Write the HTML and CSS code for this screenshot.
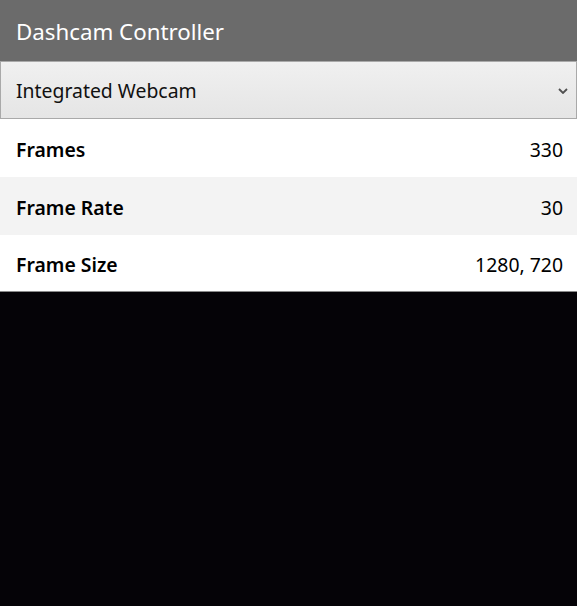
FILE: index.html
```html
<!DOCTYPE html>
<html lang="en">
<head>
<meta charset="utf-8">
<title>Dashcam Controller</title>
<link rel="stylesheet" href="styles.css">
</head>
<body>
<div class="app">
  <header class="topbar">Dashcam Controller</header>
  <div class="picker">
    <span class="picker-label">Integrated Webcam</span>
    <svg class="chevron" width="10" height="6" viewBox="0 0 10 6"><path d="M1 1 L5 5 L9 1" fill="none" stroke="#505050" stroke-width="1.8"/></svg>
  </div>
  <div class="stats">
    <div class="row"><span class="key">Frames</span><span class="val">330</span></div>
    <div class="row alt"><span class="key">Frame Rate</span><span class="val">30</span></div>
    <div class="row"><span class="key">Frame Size</span><span class="val">1280, 720</span></div>
  </div>
  <div class="video"></div>
</div>
</body>
</html>
```
FILE: styles.css
```css
html, body {
  margin: 0;
  padding: 0;
  height: 100%;
}
body {
  font-family: "Noto Sans", "Open Sans", sans-serif;
  background: #050307;
}
.app {
  display: flex;
  flex-direction: column;
  height: 100%;
}
.topbar {
  height: 61px;
  box-sizing: border-box;
  background: #6b6b6b;
  color: #fff;
  font-size: 22.3px;
  display: flex;
  align-items: center;
  padding: 1px 16px 0;
}
.picker {
  height: 58px;
  box-sizing: border-box;
  border: 1px solid #a9a9a9;
  background: linear-gradient(#f0f0f0, #e5e5e5);
  display: flex;
  align-items: center;
  justify-content: space-between;
  padding: 1px 8px 0 15px;
  font-size: 19.4px;
  color: #111;
}
.chevron {
  display: block;
}
.stats {
  background: #fff;
  border-bottom: 1px solid #8a8a8a;
}
.row {
  height: 58px;
  display: flex;
  align-items: center;
  justify-content: space-between;
  padding: 2px 14px 0 16px;
  box-sizing: border-box;
  font-size: 19.4px;
  color: #000;
}
.row:last-child {
  height: 56px;
}
.row.alt {
  background: #f3f3f3;
}
.key {
  font-weight: 600;
}
.video {
  flex: 1;
  background: #050307;
}
```
